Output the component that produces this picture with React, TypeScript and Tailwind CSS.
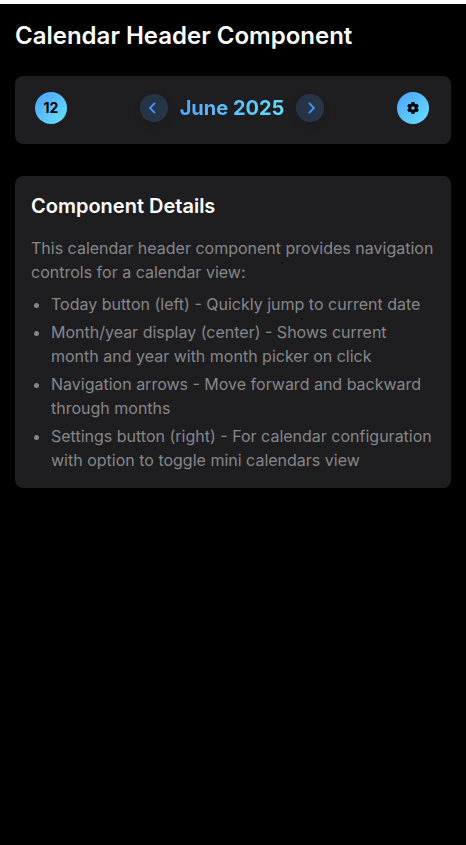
import { FaCog } from 'react-icons/fa';
import { FaChevronLeft, FaChevronRight } from 'react-icons/fa6';

const details = [
  'Today button (left) - Quickly jump to current date',
  'Month/year display (center) - Shows current month and year with month picker on click',
  'Navigation arrows - Move forward and backward through months',
  'Settings button (right) - For calendar configuration with option to toggle mini calendars view',
];

const roundButton =
  'flex h-8 w-8 items-center justify-center rounded-full bg-linear-[135deg,#4f9fff,#64e4fb] text-black';
const arrowButton =
  'flex h-7 w-7 items-center justify-center rounded-full bg-linear-[135deg,#253343,#26384b] text-[#4594ff] shadow-[0_4px_8px_rgba(0,0,0,0.07)]';

function CalendarHeader() {
  return (
    <div className="flex h-[68px] items-center justify-between rounded-lg bg-[#1e1e20] pr-[22px] pl-5 pb-1">
      <button className={`${roundButton} text-sm font-bold`}>12</button>
      <div className="flex items-center gap-3">
        <button className={`${arrowButton} pr-px`} aria-label="Previous month">
          <FaChevronLeft className="h-3 w-3 stroke-current [stroke-width:24]" />
        </button>
        <span className="bg-linear-[135deg,#4f9fff,#64e4fb] bg-clip-text text-xl font-bold whitespace-nowrap text-transparent">
          June 2025
        </span>
        <button className={`${arrowButton} pl-px`} aria-label="Next month">
          <FaChevronRight className="h-3 w-3 stroke-current [stroke-width:24]" />
        </button>
      </div>
      <button className={roundButton} aria-label="Settings">
        <FaCog size={12} className="stroke-current [stroke-width:12]" />
      </button>
    </div>
  );
}

export default function App() {
  return (
    <div className="h-[845px] border-t-4 border-white bg-black px-[15px] pt-4 font-['Inter',sans-serif] text-white">
      <h1 className="mb-6 text-2xl font-semibold">Calendar Header Component</h1>
      <CalendarHeader />
      <section className="mt-8 rounded-lg bg-[#1e1e20] p-4">
        <h2 className="mb-4 text-xl font-semibold">Component Details</h2>
        <div className="text-[#86868b]">
          <p>This calendar header component provides navigation controls for a calendar view:</p>
          <ul className="mt-2 list-disc space-y-1 pl-5">
            {details.map((item) => (
              <li key={item}>{item}</li>
            ))}
          </ul>
        </div>
      </section>
    </div>
  );
}
